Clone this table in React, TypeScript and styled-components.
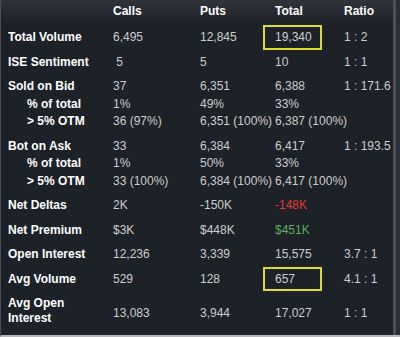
import React from "react";
import styled, { createGlobalStyle, css } from "styled-components";

const Global = createGlobalStyle`
  html, body { margin: 0; padding: 0; background: #1d2128; }
  body { font-family: "Liberation Sans", Arial, sans-serif; }
`;

const Frame = styled.div`
  width: 400px;
  height: 337px;
  box-sizing: border-box;
  display: flex;
  background: #1d2128;
  border-left: 1px solid #4a4e55;
  border-bottom: 2px solid #b5b7ba;
  overflow: hidden;
`;

const Table = styled.div`
  flex: 1;
  display: flex;
  flex-direction: column;
  font-size: 12px;
`;

const Rail = styled.div`
  width: 3px;
  background: #4a5058;
`;

const Edge = styled.div`
  width: 4px;
  background: #2a2e35;
`;

const grid = css`
  display: grid;
  grid-template-columns: 105px 87px 75px 69px 1fr;
  padding-left: 7px;
`;

const Header = styled.div`
  ${grid};
  height: 22px;
  align-items: center;
  background: linear-gradient(#30343a, #1f2329);
  color: #ffffff;
  font-weight: bold;
`;

type Kind = "main" | "sub" | "tall";

const Row = styled.div<{ $kind: Kind }>`
  ${grid};
  line-height: 17.5px;
  align-items: center;
  padding-top: ${(p) => (p.$kind === "sub" ? 0 : p.$kind === "tall" ? 8 : 7)}px;
`;

const Label = styled.div<{ $indent?: boolean; $tall?: boolean }>`
  color: #ffffff;
  font-weight: bold;
  white-space: nowrap;
  padding-left: ${(p) => (p.$indent ? 19 : 0)}px;
  line-height: ${(p) => (p.$tall ? "15px" : "inherit")};
`;

const Cell = styled.div<{ $tone?: "red" | "green"; $boxed?: boolean; $low?: boolean }>`
  position: relative;
  white-space: nowrap;
  color: ${(p) =>
    p.$tone === "red" ? "#e33b3b" : p.$tone === "green" ? "#5fae5a" : "#cdcdcd"};
  margin-top: ${(p) => (p.$low ? 5 : 0)}px;
  ${(p) =>
    p.$boxed &&
    css`
      &::after {
        content: "";
        position: absolute;
        left: -12px;
        top: -4px;
        bottom: -3px;
        width: 59px;
        box-sizing: border-box;
        border: 2px solid #dedb2a;
      }
    `}
`;

type RowData = {
  kind: Kind;
  label: string[];
  calls: string;
  puts: string;
  total: string;
  ratio: string;
  boxed?: boolean;
  tone?: "red" | "green";
};

const rows: RowData[] = [
  { kind: "main", label: ["Total Volume"], calls: "6,495", puts: "12,845", total: "19,340", ratio: "1 : 2", boxed: true },
  { kind: "main", label: ["ISE Sentiment"], calls: "\u00a05", puts: "5", total: "10", ratio: "1 : 1" },
  { kind: "main", label: ["Sold on Bid"], calls: "37", puts: "6,351", total: "6,388", ratio: "1 : 171.6" },
  { kind: "sub", label: ["% of total"], calls: "1%", puts: "49%", total: "33%", ratio: "" },
  { kind: "sub", label: ["> 5% OTM"], calls: "36 (97%)", puts: "6,351 (100%)", total: "6,387 (100%)", ratio: "" },
  { kind: "main", label: ["Bot on Ask"], calls: "33", puts: "6,384", total: "6,417", ratio: "1 : 193.5" },
  { kind: "sub", label: ["% of total"], calls: "1%", puts: "50%", total: "33%", ratio: "" },
  { kind: "sub", label: ["> 5% OTM"], calls: "33 (100%)", puts: "6,384 (100%)", total: "6,417 (100%)", ratio: "" },
  { kind: "main", label: ["Net Deltas"], calls: "2K", puts: "-150K", total: "-148K", ratio: "", tone: "red" },
  { kind: "main", label: ["Net Premium"], calls: "$3K", puts: "$448K", total: "$451K", ratio: "", tone: "green" },
  { kind: "main", label: ["Open Interest"], calls: "12,236", puts: "3,339", total: "15,575", ratio: "3.7 : 1" },
  { kind: "main", label: ["Avg Volume"], calls: "529", puts: "128", total: "657", ratio: "4.1 : 1", boxed: true },
  { kind: "tall", label: ["Avg Open", "Interest"], calls: "13,083", puts: "3,944", total: "17,027", ratio: "1 : 1" },
];

export default function App() {
  return (
    <>
      <Global />
      <Frame>
        <Table>
          <Header>
            <div />
            <div>Calls</div>
            <div>Puts</div>
            <div>Total</div>
            <div>Ratio</div>
          </Header>
          {rows.map((r, i) => {
            const low = r.kind === "tall";
            return (
              <Row key={i} $kind={r.kind}>
                <Label $indent={r.kind === "sub"} $tall={low}>
                  {r.label.map((l, j) => (
                    <div key={j}>{l}</div>
                  ))}
                </Label>
                <Cell $low={low}>{r.calls}</Cell>
                <Cell $low={low}>{r.puts}</Cell>
                <Cell $low={low} $tone={r.tone} $boxed={r.boxed}>
                  {r.total}
                </Cell>
                <Cell $low={low}>{r.ratio}</Cell>
              </Row>
            );
          })}
        </Table>
        <Rail />
        <Edge />
      </Frame>
    </>
  );
}
